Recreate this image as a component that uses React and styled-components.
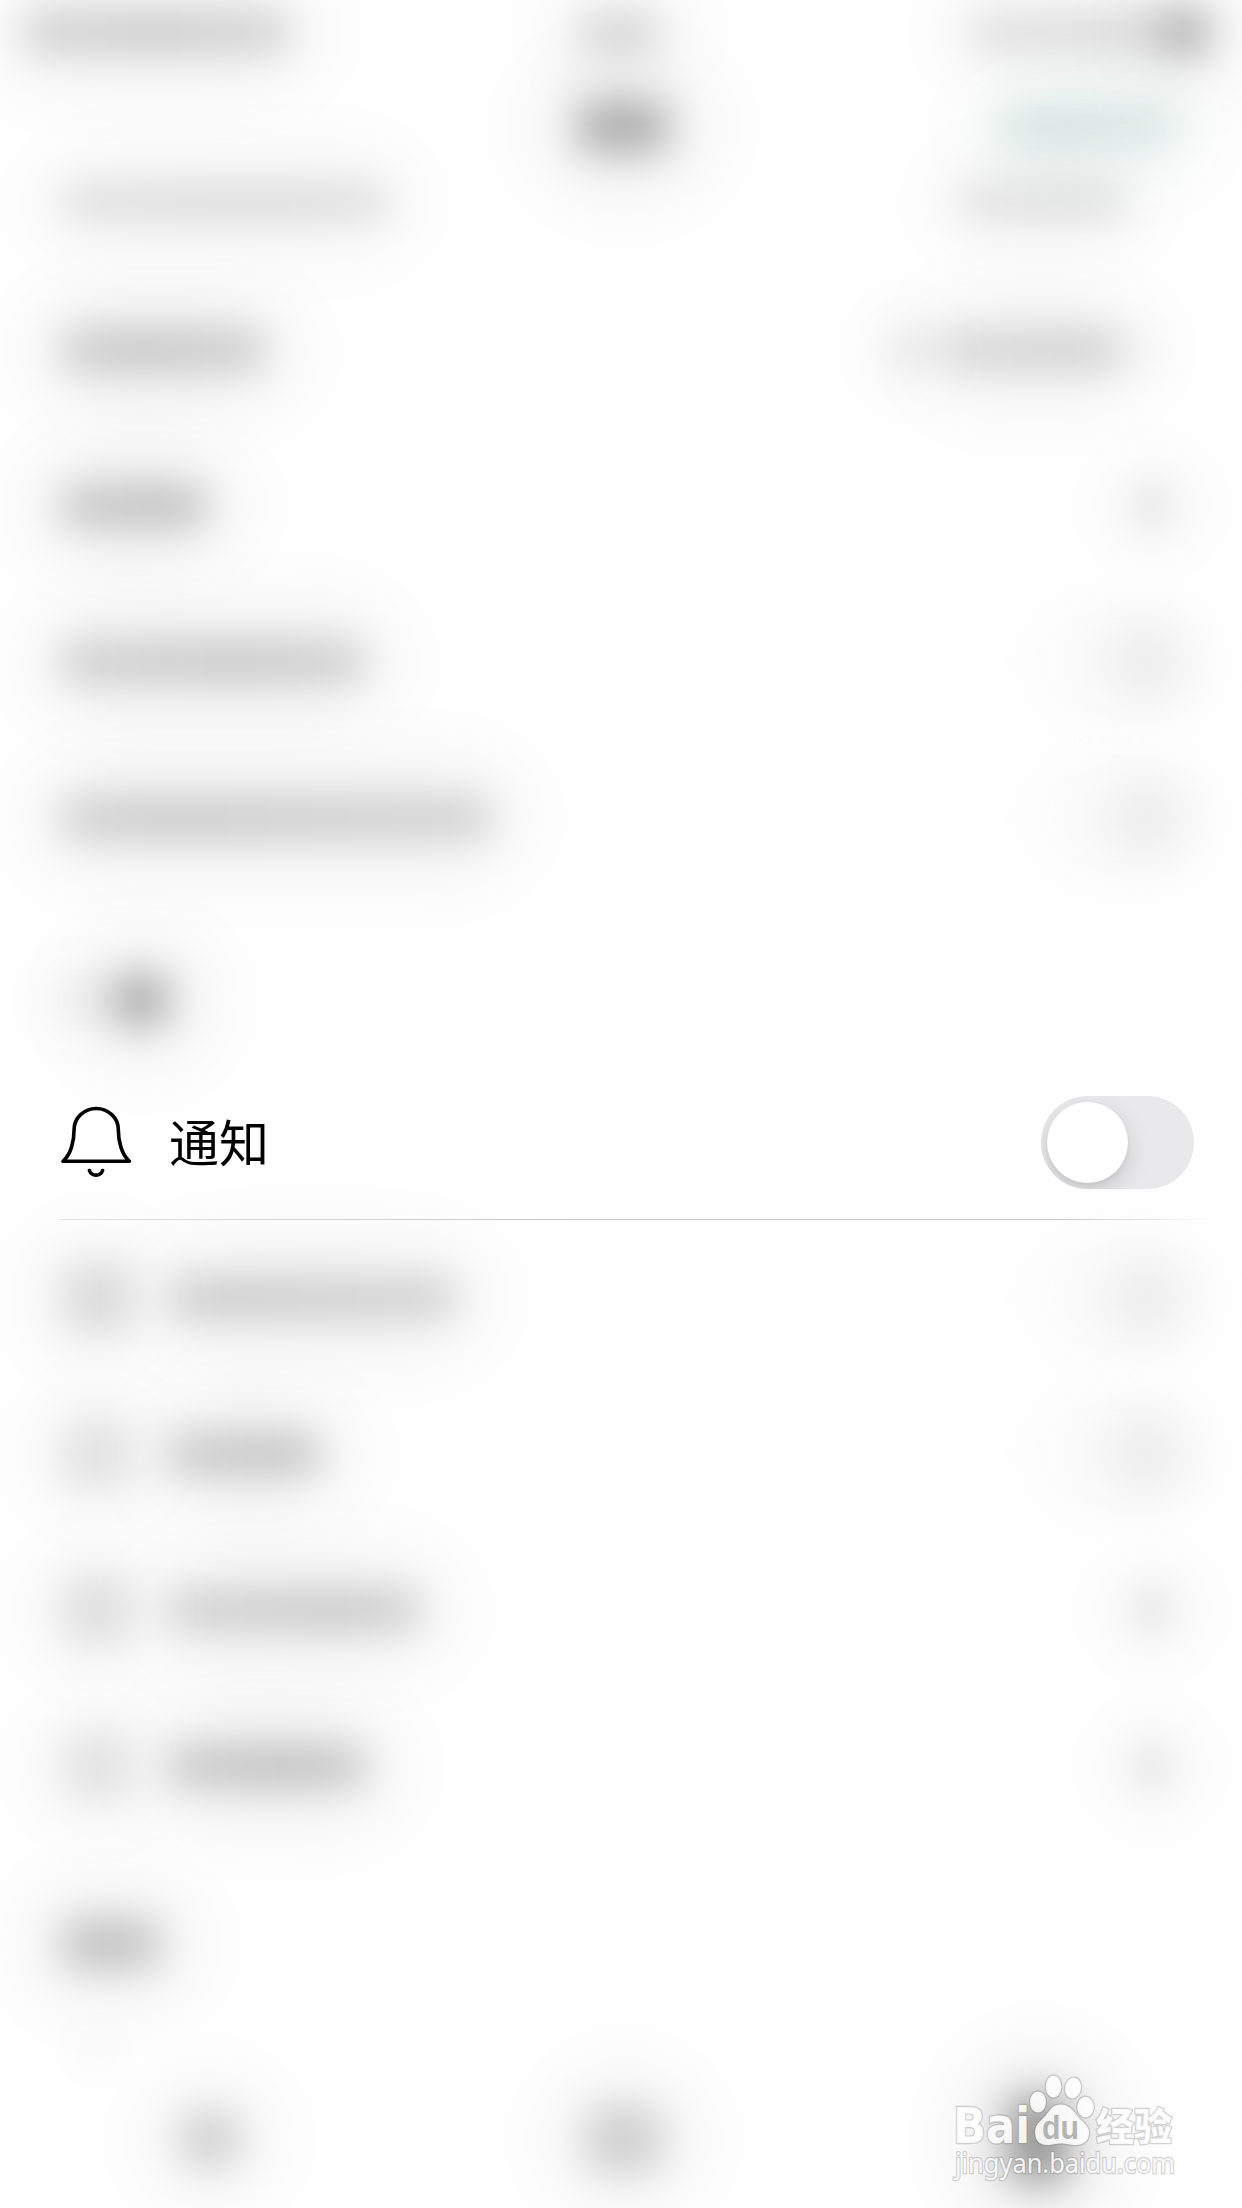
import React, { useState } from 'react'
import styled, { createGlobalStyle } from 'styled-components'

const GlobalStyle = createGlobalStyle`
	body {
		margin: 0;
		padding: 0;
		background-color: #fefefe;
		color: #000;
		font-family: 'Liberation Sans', 'Noto Sans CJK SC', sans-serif;
	}

	*, *::before, *::after {
		box-sizing: border-box;
	}
`

const Screen = styled.div`
	position: relative;
	display: flex;
	flex-direction: column;
	width: 1242px;
	height: 2208px;
	overflow: hidden;
	background: #fefefe;
`

const tint = (props, amount) => `rgba(${props.$rgb || '0, 0, 0'}, ${props.$ink * amount})`

// out of focus content: a soft bar, darkest at $peak, with a wide halo
const Smudge = styled.div`
	flex: none;
	width: ${props => props.$w}px;
	height: ${props => props.$h || 40}px;
	margin-left: ${props => props.$before || 0}px;
	margin-right: ${props => props.$after || 0}px;
	border-radius: 14px;
	background: linear-gradient(
		90deg,
		${props => tint(props, 0.9)},
		${props => tint(props, 1.05)} ${props => props.$peak || 50}%,
		${props => tint(props, 0.88)}
	);
	box-shadow: 0 0 84px 10px ${props => tint(props, 0.46)};
	filter: blur(20px);
`

const StatusBar = styled.div`
	display: flex;
	flex: none;
	align-items: center;
	justify-content: space-between;
	height: 74px;
	padding: 0 30px 10px 22px;
`

const StatusGroup = styled.div`
	display: flex;
	align-items: center;
`

const NavBar = styled.div`
	display: grid;
	flex: none;
	grid-template-columns: 1fr 94px 1fr;
	align-items: center;
	height: 106px;
	padding: 0 64px 0 68px;

	& > :last-child {
		justify-self: end;
	}
`

const Row = styled.div`
	display: flex;
	flex: none;
	align-items: center;
	justify-content: space-between;
	height: ${props => (props.$cut ? 92 : 156)}px;
	padding: 0 48px ${props => (props.$cut ? 48 : 0)}px 60px;
`

const Start = styled.div`
	display: flex;
	align-items: center;
	gap: 37px;
`

const End = styled.div`
	display: flex;
	align-items: center;
`

const IconSlot = styled.div`
	display: flex;
	flex: none;
	width: 72px;
	justify-content: center;
`

const ActiveRow = styled(Row)`
	padding-top: 1px;
	border-bottom: 1px solid;
	border-image: linear-gradient(
		90deg, transparent 60px, #e6e6e6 60px, #dedede 180px, #c9c9c9 600px, #c9c9c9 1060px, transparent 1215px
	) 1;
`

const Label = styled.span`
	padding-bottom: 5px;
	font-family: 'Noto Sans CJK SC', sans-serif;
	font-size: 50px;
	line-height: 72px;
`

const BellIcon = styled.svg`
	display: block;
	width: 72px;
	height: 74px;
	fill: none;
	stroke: #000;
	stroke-width: 3.6;
	stroke-linecap: round;
	stroke-linejoin: round;
`

const Track = styled.button`
	flex: none;
	width: 153px;
	height: 93px;
	padding: 6px;
	border: 0;
	border-radius: 47px;
	overflow: hidden;
	background: ${props => (props.$on ? '#34c759' : '#e9e9eb')};
`

const Knob = styled.span`
	display: block;
	width: 81px;
	height: 81px;
	margin-left: ${props => (props.$on ? 60 : 0)}px;
	border-radius: 50%;
	background: #fff;
	box-shadow: 0 9px 24px rgba(0, 0, 0, 0.15), 0 2px 4px rgba(0, 0, 0, 0.06);
`

const SoftTrack = styled.div`
	width: 153px;
	height: 84px;
	border-radius: 42px;
	background: linear-gradient(90deg, #fdfdfd, #f8f8f8 40%, #ededee 62%, #ededee 82%, #f8f8f8);
	box-shadow: 0 0 60px rgba(0, 0, 0, 0.025);
	filter: blur(22px);
`

const Heading = styled.div`
	display: flex;
	flex: none;
	align-items: center;
	height: 168px;
	padding: ${props => props.$top}px 60px 0;
`

const Peek = styled.div`
	display: flex;
	flex: none;
	align-items: flex-end;
	height: 50px;
	padding: 0 84px;
`

const TabBar = styled.div`
	display: grid;
	flex: none;
	grid-template-columns: repeat(3, 414px);
	align-items: center;
	justify-items: center;
	height: 146px;
	padding: 8px 0 0 3px;
`

const Watermark = styled.svg`
	position: absolute;
	right: 62px;
	bottom: 24px;
	width: 230px;
	height: 114px;
	overflow: visible;

	text, ellipse, path {
		fill: rgba(255, 255, 255, 0.88);
		stroke: rgba(130, 130, 130, 0.36);
		stroke-width: 2.4;
		paint-order: stroke;
	}
`

const MarkText = styled.text`
	font-family: ${props => props.$family || "'Liberation Sans', sans-serif"};
	font-size: ${props => props.$size}px;
	font-weight: ${props => props.$weight || 700};

	&& {
		${props => props.$grey && 'fill: #b4b4b4; stroke: none;'}
	}
`

const topRows = [
	{ label: 149, ink: 0.23, peak: 70, value: 'disclosure' },
	{ label: 306, ink: 0.2, peak: 58, value: 'toggle' },
	{ label: 432, ink: 0.195, peak: 25, value: 'toggle' },
]

const iconRows = [
	{ icon: 0.14, iconPeak: 75, label: 288, ink: 0.195, peak: 20, value: 'toggle' },
	{ icon: 0.11, iconPeak: 20, label: 153, ink: 0.225, peak: 70, value: 'toggle' },
	{ icon: 0.12, iconPeak: 50, label: 253, ink: 0.2, peak: 68, value: 'disclosure' },
	{ icon: 0.105, iconPeak: 50, label: 198, ink: 0.235, peak: 60, value: 'disclosure' },
]

const RowEnd = ({ kind }) => (
	kind === 'toggle' ? <SoftTrack /> : <Smudge $w={32} $h={46} $ink={0.135} $after={26} />
)

const Bell = () => (
	<BellIcon viewBox="60 1105 72 74">
		<path d="M63 1161.3H129.4C121.5 1154.5 118.3 1141 118.3 1129.5A22.1 21 0 0 0 74.1 1129.5C74.1 1141 71 1154.5 63 1161.3Z" />
		<path d="M89.4 1170.5C91.5 1176.6 100.5 1176.6 102.6 1170.5" />
	</BellIcon>
)

const Toggle = () => {
	const [on, setOn] = useState(false)

	return (
		<Track type="button" role="switch" aria-checked={on} $on={on} onClick={() => setOn(!on)}>
			<Knob $on={on} />
		</Track>
	)
}

const BaiduMark = () => (
	<Watermark viewBox="950 2070 230 114">
		<MarkText x="953" y="2143" $size={49} $family="'DejaVu Sans', sans-serif" textLength="77" lengthAdjust="spacingAndGlyphs">Bai</MarkText>
		<ellipse cx="1038" cy="2102" rx="8" ry="10.5" />
		<ellipse cx="1053.5" cy="2086.5" rx="7.8" ry="11" />
		<ellipse cx="1073" cy="2088" rx="8" ry="10.5" transform="rotate(12 1073 2088)" />
		<ellipse cx="1085.5" cy="2107" rx="8.3" ry="10.3" />
		<path d="M1061 2104.5C1070 2104.5 1074 2112 1079 2118C1084 2123 1089 2126 1089 2133C1089 2141 1083 2145 1076 2145C1070 2145 1067 2143.5 1061 2143.5C1055 2143.5 1053 2145 1047 2145C1039 2145 1035 2140 1035 2132C1035 2124 1041 2121 1046 2115C1051 2109 1053 2104.5 1061 2104.5Z" />
		<MarkText x="1042" y="2139" $size={33} $grey textLength="37" lengthAdjust="spacingAndGlyphs">du</MarkText>
		<MarkText x="1096" y="2140" $size={38} $weight={900} $family="'Noto Sans CJK SC', sans-serif">经验</MarkText>
		<MarkText x="955" y="2173" $size={28} $weight={400} $family="'Noto Sans', sans-serif" textLength="220" lengthAdjust="spacingAndGlyphs">jingyan.baidu.com</MarkText>
	</Watermark>
)

const App = () => {
	return (
		<>
			<GlobalStyle />

			<Screen>
				<StatusBar>
					<Smudge $w={268} $h={42} $ink={0.19} />
					<Smudge $w={84} $h={42} $ink={0.15} $after={20} />
					<StatusGroup>
						<Smudge $w={186} $h={38} $ink={0.13} $peak={80} />
						<Smudge $w={58} $h={44} $ink={0.3} />
					</StatusGroup>
				</StatusBar>

				<NavBar>
					<span />
					<Smudge $w={94} $h={50} $ink={0.32} />
					<Smudge $w={180} $h={42} $ink={0.17} $rgb="28, 115, 95" $peak={35} />
				</NavBar>

				<Row $cut>
					<Smudge $w={330} $h={34} $ink={0.145} $peak={60} />
					<Smudge $w={172} $h={34} $ink={0.125} $after={66} $peak={65} />
				</Row>
				<Row>
					<Smudge $w={206} $h={44} $ink={0.21} $peak={40} />
					<End>
						<Smudge $w={28} $h={42} $ink={0.13} />
						<Smudge $w={184} $h={42} $ink={0.17} $before={20} $peak={75} />
						<Smudge $w={10} $h={26} $ink={0.08} $before={24} $after={34} />
					</End>
				</Row>
				{topRows.map((row, i) => (
					<Row key={i}>
						<Smudge $w={row.label} $h={44} $ink={row.ink} $peak={row.peak} />
						<RowEnd kind={row.value} />
					</Row>
				))}

				<Heading $top={40}>
					<Smudge $w={40} $h={14} $ink={0.15} />
					<Smudge $w={58} $h={50} $ink={0.33} $before={12} />
				</Heading>

				<ActiveRow>
					<Start>
						<Bell />
						<Label>通知</Label>
					</Start>
					<Toggle />
				</ActiveRow>

				{iconRows.map((row, i) => (
					<Row key={i}>
						<Start>
							<IconSlot>
								<Smudge $w={70} $h={70} $ink={row.icon} $peak={row.iconPeak} />
							</IconSlot>
							<Smudge $w={row.label} $h={42} $ink={row.ink} $peak={row.peak} />
						</Start>
						<RowEnd kind={row.value} />
					</Row>
				))}

				<Heading $top={32}>
					<Smudge $w={102} $h={50} $ink={0.23} $peak={35} />
				</Heading>

				<Peek>
					<Smudge $w={26} $h={24} $ink={0.06} />
				</Peek>

				<TabBar>
					<Smudge $w={62} $h={56} $ink={0.18} />
					<Smudge $w={80} $h={68} $ink={0.18} />
					<Smudge $w={60} $h={84} $ink={0.42} />
				</TabBar>

				<BaiduMark />
			</Screen>
		</>
	)
}

export default App
